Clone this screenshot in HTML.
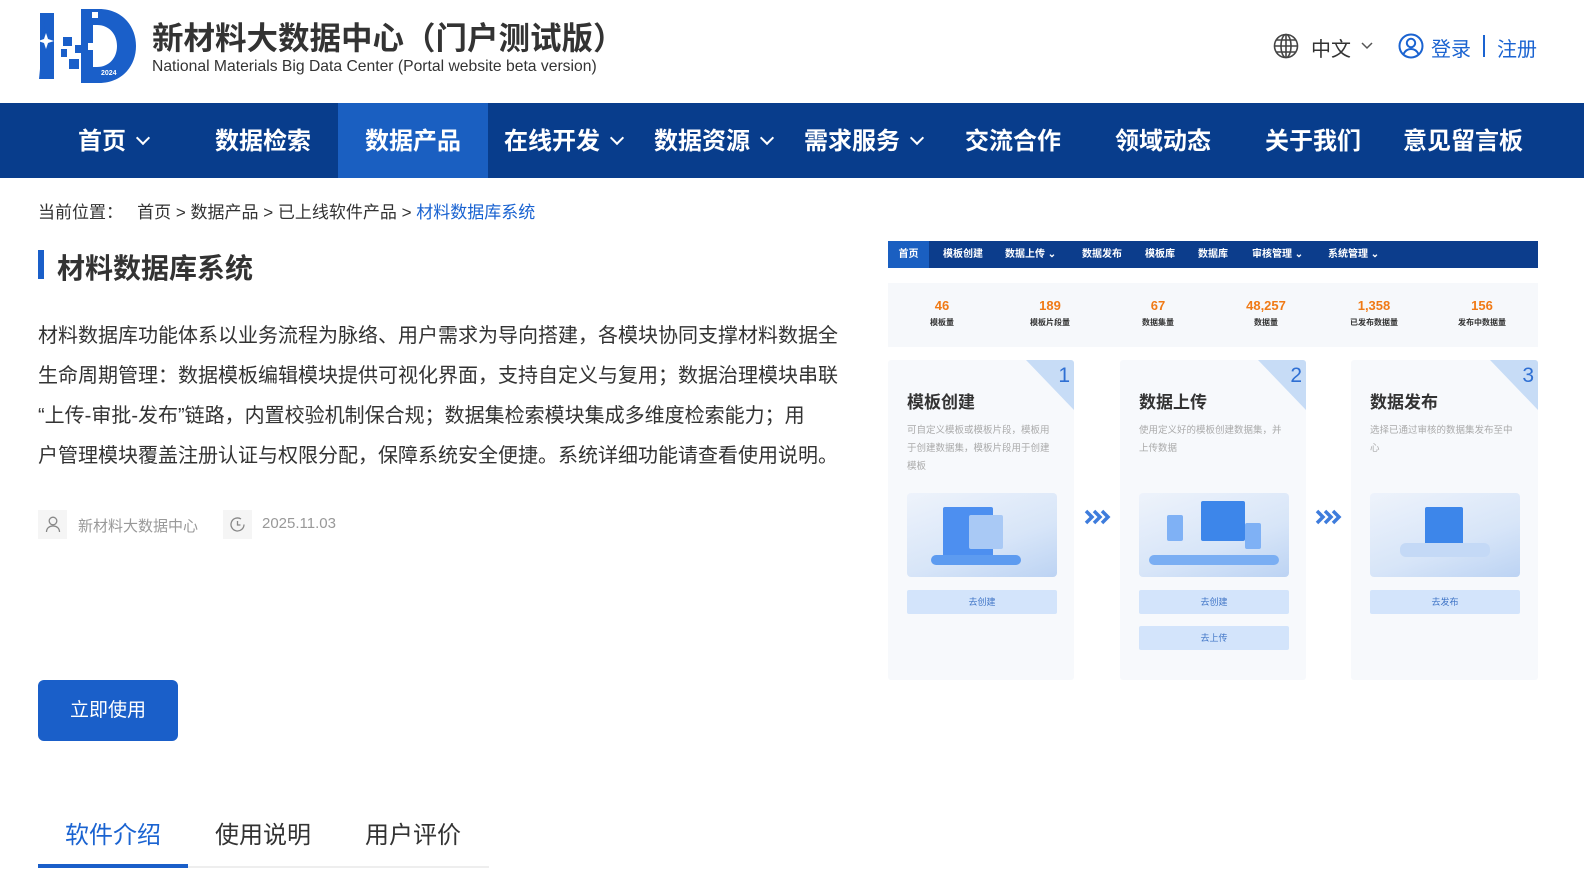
<!DOCTYPE html>
<html><head><meta charset="utf-8"><style>
*{margin:0;padding:0;box-sizing:border-box}
body{width:1584px;height:895px;overflow:hidden;background:#fff;font-family:"Liberation Sans","Noto Sans CJK SC",sans-serif;color:#333;position:relative}
.abs{position:absolute}
.nav{position:absolute;left:0;top:103px;width:1584px;height:75px;background:#083d8c}
.nav div{position:absolute;top:0;height:75px;line-height:77px;color:#fff;font-size:24px;font-weight:bold;text-align:center;width:150px}
.nav .act{background:#1a5fc1}
.chev{display:inline-block;width:10px;height:10px;border-right:2px solid #fff;border-bottom:2px solid #fff;transform:rotate(45deg);margin-left:12px;position:relative;top:-6px}
.p{font-size:20px;line-height:40px;color:#333;width:860px;white-space:nowrap}
.shot{position:absolute;left:888px;top:241px;width:650px;height:440px;background:#fff}
.sn{height:27px;background:#0c3d8c;position:relative}
.sn span{position:absolute;top:0;line-height:27px;color:#fff;font-size:10px;font-weight:bold}
.stats{position:absolute;top:42px;left:0;width:650px;height:64px;background:#f6f8fb}
.st{position:absolute;top:15px;width:80px;text-align:center}
.st b{display:block;color:#f07a16;font-size:13px}
.st i{display:block;font-style:normal;font-size:8px;font-weight:bold;color:#333;margin-top:4px}
.card{position:absolute;top:119px;width:186px;height:320px;background:#f7f9fc;border-radius:3px;overflow:hidden}
.card .tri{position:absolute;right:0;top:0;width:0;height:0;border-left:48px solid transparent;border-top:50px solid #c7dcf6}
.card .n{position:absolute;right:4px;top:4px;color:#2e6fd3;font-size:21px}
.card h4{position:absolute;left:19px;top:28px;font-size:17px;color:#333}
.card p{position:absolute;left:19px;top:62px;width:150px;font-size:9.5px;line-height:18px;color:#aaa}
.card .img{position:absolute;left:19px;top:133px;width:150px;height:84px;border-radius:4px;background:linear-gradient(160deg,#eef3fb,#d7e5f8 60%,#bcd3f3);overflow:hidden}
.card .img i{position:absolute;background:#3d86ea;border-radius:2px}
.card .btn{position:absolute;left:19px;width:150px;height:24px;background:#d3e4fb;border-radius:2px;color:#3f74c6;font-size:9px;text-align:center;line-height:24px}
.arr{position:absolute;top:267px}
</style></head><body>
<!-- logo -->
<svg class="abs" style="left:37px;top:9px" width="100" height="74" viewBox="0 0 100 74">
<path d="M3 4h14v66H3z" fill="#1a5fc9"/>
<path d="M2 70 L8 10 L16 10 L14 70Z" fill="#1a5fc9"/>
<path d="M44 0h18c22 0 37 16 37 37s-15 37-37 37H44V58h16c12 0 20-9 20-21s-8-21-20-21H44z" fill="#1a5fc9"/>
<rect x="44" y="0" width="12" height="74" fill="#1a5fc9"/>
<rect x="26" y="28" width="9" height="9" fill="#1a5fc9"/><rect x="38" y="36" width="8" height="8" fill="#1a5fc9"/>
<rect x="24" y="40" width="6" height="8" fill="#1a5fc9"/><rect x="32" y="50" width="10" height="10" fill="#1a5fc9"/>
<rect x="55" y="3" width="6" height="6" fill="#fff"/><rect x="51" y="34" width="7" height="7" fill="#fff"/>
<text x="64" y="66" font-size="7" fill="#fff" font-weight="bold">2024</text>
<path d="M9 24l2 6 6 2-6 2-2 6-2-6-6-2 6-2z" fill="#fff"/>
</svg>
<div class="abs" style="left:152px;top:13px;font-size:31.5px;font-weight:bold;color:#333">新材料大数据中心（门户测试版）</div>
<div class="abs" style="left:152px;top:58px;font-size:15.7px;color:#333">National Materials Big Data Center (Portal website beta version)</div>
<!-- top right -->
<svg class="abs" style="left:1273px;top:33px" width="26" height="26" viewBox="0 0 26 26" fill="none" stroke="#444" stroke-width="1.6"><circle cx="13" cy="13" r="11.5"/><ellipse cx="13" cy="13" rx="5" ry="11.5"/><path d="M1.5 13h23M3.5 7h19M3.5 19h19M13 1.5v23"/></svg>
<div class="abs" style="left:1311px;top:33px;font-size:20px;color:#333">中文</div>
<svg class="abs" style="left:1360px;top:41px" width="14" height="10"><path d="M2 2l5 5 5-5" stroke="#555" stroke-width="1.5" fill="none"/></svg>
<svg class="abs" style="left:1398px;top:33px" width="26" height="26" viewBox="0 0 26 26" fill="none" stroke="#1a63d1" stroke-width="2"><circle cx="13" cy="13" r="11.5"/><circle cx="13" cy="10" r="4.2"/><path d="M5.5 21c2-4 5-5 7.5-5s5.5 1 7.5 5"/></svg>
<div class="abs" style="left:1431px;top:33px;font-size:20px;color:#1a63d1">登录</div>
<div class="abs" style="left:1483px;top:35px;width:1.5px;height:22px;background:#1a63d1"></div>
<div class="abs" style="left:1497px;top:33px;font-size:20px;color:#1a63d1">注册</div>
<!-- nav -->
<div class="nav">
<div style="left:38px">首页<span class="chev"></span></div>
<div style="left:188px">数据检索</div>
<div class="act" style="left:338px">数据产品</div>
<div style="left:488px">在线开发<span class="chev"></span></div>
<div style="left:638px">数据资源<span class="chev"></span></div>
<div style="left:788px">需求服务<span class="chev"></span></div>
<div style="left:938px">交流合作</div>
<div style="left:1088px">领域动态</div>
<div style="left:1238px">关于我们</div>
<div style="left:1388px">意见留言板</div>
</div>
<!-- breadcrumb -->
<div class="abs" style="left:38px;top:198px;font-size:17px;color:#333">当前位置：&nbsp;&nbsp;&nbsp;首页 &gt; 数据产品 &gt; 已上线软件产品 &gt; <span style="color:#1a63d1">材料数据库系统</span></div>
<div class="abs" style="left:38px;top:250px;width:6px;height:29px;background:#1a5fc9"></div>
<div class="abs" style="left:57px;top:247px;font-size:28px;font-weight:bold;color:#333">材料数据库系统</div>
<div class="abs p" style="left:38px;top:316px">材料数据库功能体系以业务流程为脉络、用户需求为导向搭建，各模块协同支撑材料数据全<br>生命周期管理：数据模板编辑模块提供可视化界面，支持自定义与复用；数据治理模块串联<br>“上传-审批-发布”链路，内置校验机制保合规；数据集检索模块集成多维度检索能力；用<br>户管理模块覆盖注册认证与权限分配，保障系统安全便捷。系统详细功能请查看使用说明。</div>
<!-- meta -->
<div class="abs" style="left:38px;top:510px;width:29px;height:29px;background:#f5f5f5"></div>
<svg class="abs" style="left:44px;top:515px" width="18" height="18" viewBox="0 0 18 18" fill="none" stroke="#888" stroke-width="1.3"><circle cx="9" cy="6" r="3.8"/><path d="M2.5 17c0-4 3-6 6.5-6s6.5 2 6.5 6"/></svg>
<div class="abs" style="left:78px;top:515px;font-size:15px;color:#999">新材料大数据中心</div>
<div class="abs" style="left:223px;top:510px;width:29px;height:29px;background:#f5f5f5"></div>
<svg class="abs" style="left:229px;top:516px" width="17" height="17" viewBox="0 0 17 17" fill="none" stroke="#888" stroke-width="1.3"><path d="M15 8.5A6.5 6.5 0 1 1 12 3"/><path d="M8.5 5v4h3"/></svg>
<div class="abs" style="left:262px;top:515px;font-size:15px;color:#999">2025.11.03</div>
<!-- button -->
<div class="abs" style="left:38px;top:680px;width:140px;height:61px;background:#1a5fc9;border-radius:6px;color:#fff;font-size:19px;line-height:61px;text-align:center">立即使用</div>
<!-- tabs -->
<div class="abs" style="left:38px;top:866px;width:451px;height:2px;background:#eee"></div>
<div class="abs" style="left:38px;top:864px;width:150px;height:4px;background:#1a5fc9"></div>
<div class="abs" style="left:38px;top:815px;width:150px;text-align:center;font-size:24px;color:#1a63d1">软件介绍</div>
<div class="abs" style="left:188px;top:815px;width:150px;text-align:center;font-size:24px;color:#333">使用说明</div>
<div class="abs" style="left:338px;top:815px;width:150px;text-align:center;font-size:24px;color:#333">用户评价</div>
<!-- screenshot -->
<div class="shot">
<div class="sn"><span style="left:0;width:41px;height:27px;background:#1a5fc1;text-align:center">首页</span><span style="left:55px">模板创建</span><span style="left:117px">数据上传 ⌄</span><span style="left:194px">数据发布</span><span style="left:257px">模板库</span><span style="left:310px">数据库</span><span style="left:364px">审核管理 ⌄</span><span style="left:440px">系统管理 ⌄</span></div>
<div class="stats">
<div class="st" style="left:14px"><b>46</b><i>模板量</i></div>
<div class="st" style="left:122px"><b>189</b><i>模板片段量</i></div>
<div class="st" style="left:230px"><b>67</b><i>数据集量</i></div>
<div class="st" style="left:338px"><b>48,257</b><i>数据量</i></div>
<div class="st" style="left:446px"><b>1,358</b><i>已发布数据量</i></div>
<div class="st" style="left:554px"><b>156</b><i>发布中数据量</i></div>
</div>
<div class="card" style="left:0"><div class="tri"></div><div class="n">1</div><h4>模板创建</h4><p>可自定义模板或模板片段，模板用于创建数据集，模板片段用于创建模板</p><div class="img"><i style="left:36px;top:14px;width:50px;height:50px;background:#4d8ff0"></i><i style="left:62px;top:22px;width:34px;height:34px;background:#a9c9f5"></i><i style="left:24px;top:62px;width:90px;height:10px;background:#5d9bf0;border-radius:5px"></i></div><div class="btn" style="top:230px">去创建</div></div>
<svg class="arr" style="left:195px" width="30" height="18" viewBox="0 0 30 18" fill="none" stroke="#3e7cdc" stroke-width="3.5"><path d="M3 3l6 6-6 6M11 3l6 6-6 6M19 3l6 6-6 6"/></svg>
<div class="card" style="left:232px"><div class="tri"></div><div class="n">2</div><h4>数据上传</h4><p>使用定义好的模板创建数据集，并上传数据</p><div class="img"><i style="left:62px;top:8px;width:44px;height:40px"></i><i style="left:28px;top:22px;width:16px;height:26px;background:#7fb1f5"></i><i style="left:106px;top:30px;width:16px;height:26px;background:#7fb1f5"></i><i style="left:10px;top:62px;width:130px;height:10px;background:#7aaef3;border-radius:5px"></i></div><div class="btn" style="top:230px">去创建</div><div class="btn" style="top:266px">去上传</div></div>
<svg class="arr" style="left:426px" width="30" height="18" viewBox="0 0 30 18" fill="none" stroke="#3e7cdc" stroke-width="3.5"><path d="M3 3l6 6-6 6M11 3l6 6-6 6M19 3l6 6-6 6"/></svg>
<div class="card" style="left:463px;width:187px"><div class="tri"></div><div class="n">3</div><h4>数据发布</h4><p>选择已通过审核的数据集发布至中心</p><div class="img"><i style="left:55px;top:14px;width:38px;height:40px"></i><i style="left:30px;top:50px;width:90px;height:14px;background:#c4d9f6;border-radius:6px"></i></div><div class="btn" style="top:230px">去发布</div></div>
</div>
</body></html>
